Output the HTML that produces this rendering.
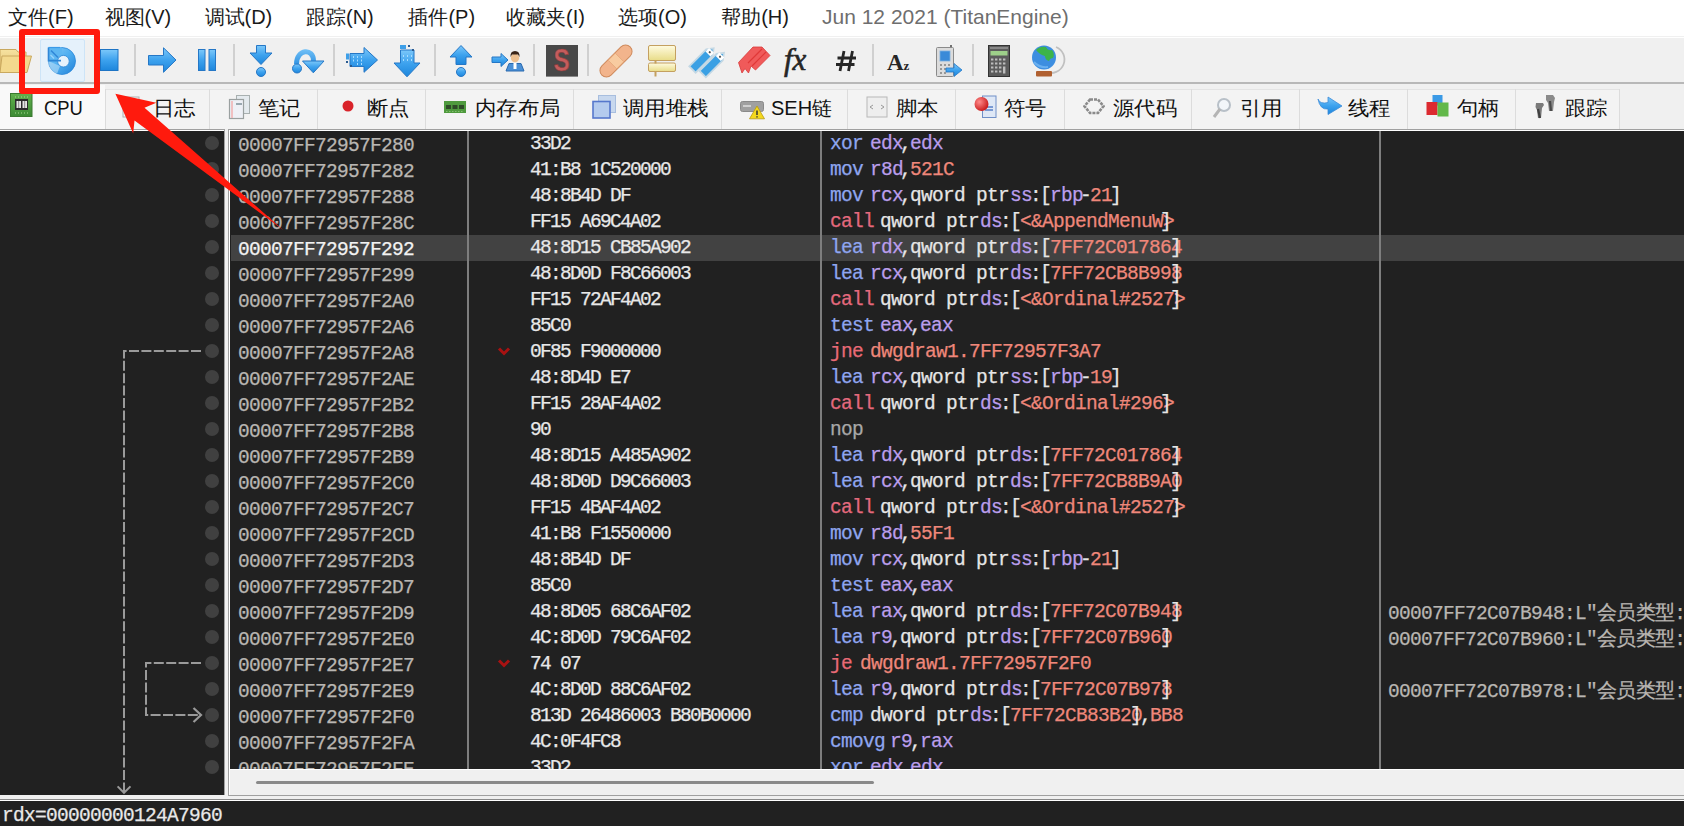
<!DOCTYPE html>
<html><head><meta charset="utf-8"><style>
html,body{margin:0;padding:0;}
body{width:1684px;height:826px;overflow:hidden;position:relative;background:#ffffff;font-family:'Liberation Sans',sans-serif;}
.abs{position:absolute;}
.mi{position:absolute;top:5px;font-size:20px;line-height:24px;color:#1a1a1a;white-space:pre;}
.tt{position:absolute;top:96px;font-size:20px;line-height:24px;color:#111;white-space:pre;}
.ti{position:absolute;}
.row{position:absolute;left:0;width:1684px;height:26px;}
.row i{position:absolute;top:4px;font-style:normal;font-family:'Liberation Mono',monospace;font-size:19.5px;letter-spacing:-0.7px;line-height:22px;white-space:pre;-webkit-text-stroke:0.25px currentColor;}
.row i.b{letter-spacing:-1.7px;top:2px;}
.row i.d{top:2px;}
.hl{position:absolute;left:231px;width:1453px;height:26px;background:#424242;}
</style></head><body>
<div class="abs" style="left:0;top:0;width:1684px;height:37px;background:#ffffff"></div>
<span class="mi" style="left:8px">文件(F)</span><span class="mi" style="left:104.5px">视图(V)</span><span class="mi" style="left:204.5px">调试(D)</span><span class="mi" style="left:306px">跟踪(N)</span><span class="mi" style="left:408.4px">插件(P)</span><span class="mi" style="left:506px">收藏夹(I)</span><span class="mi" style="left:618px">选项(O)</span><span class="mi" style="left:721.2px">帮助(H)</span><span class="mi" style="left:822px;color:#6e6e6e;font-size:21px;top:5px">Jun 12 2021 (TitanEngine)</span>
<div class="abs" style="left:0;top:36px;width:1684px;height:47px;background:#f0f0f0"></div><div class="abs" style="left:0;top:37px;width:1684px;height:1px;background:#ffffff"></div>
<div class="abs" style="left:0;top:82px;width:1684px;height:2px;background:#b8b8b8"></div>
<div class="abs" style="left:0;top:84px;width:1684px;height:45px;background:#f0f0f0"></div>
<div style="position:absolute;left:133.5px;top:44px;width:2px;height:32px;background:#d0d0d0"></div><div style="position:absolute;left:233px;top:44px;width:2px;height:32px;background:#d0d0d0"></div><div style="position:absolute;left:333px;top:44px;width:2px;height:32px;background:#d0d0d0"></div><div style="position:absolute;left:433.5px;top:44px;width:2px;height:32px;background:#d0d0d0"></div><div style="position:absolute;left:533px;top:44px;width:2px;height:32px;background:#d0d0d0"></div><div style="position:absolute;left:587px;top:44px;width:2px;height:32px;background:#d0d0d0"></div><div style="position:absolute;left:872px;top:44px;width:2px;height:32px;background:#d0d0d0"></div><div style="position:absolute;left:971.5px;top:44px;width:2px;height:32px;background:#d0d0d0"></div><div style="position:absolute;left:40px;top:39px;width:45px;height:43px;background:#e5f1fb;border:1px solid #cde4f7;box-sizing:border-box;border-radius:2px"></div><svg style="position:absolute;left:0;top:0" width="1100" height="84" viewBox="0 0 1100 84"><defs><linearGradient id="gblue" x1="0" y1="0" x2="0" y2="1"><stop offset="0" stop-color="#7cc8fa"/><stop offset="0.5" stop-color="#3da2ee"/><stop offset="1" stop-color="#1d86dc"/></linearGradient><linearGradient id="gblue2" gradientUnits="userSpaceOnUse" x1="0" y1="47" x2="0" y2="66"><stop offset="0" stop-color="#7cc8fa"/><stop offset="1" stop-color="#2a8ee0"/></linearGradient><linearGradient id="gfold" x1="0" y1="0" x2="0" y2="1"><stop offset="0" stop-color="#f6e2a0"/><stop offset="1" stop-color="#e2c070"/></linearGradient></defs><path d="M0 49.5 H16 L18 52 H26 V72.5 H0 Z" fill="url(#gfold)" stroke="#c9a85e"/><path d="M2 56 H31.5 L27 72.5 H0 Z" fill="#f3d98e" stroke="#c9a85e"/><defs><linearGradient id="grl" x1="0" y1="0" x2="1" y2="1"><stop offset="0" stop-color="#8ccdf8"/><stop offset="0.5" stop-color="#4eaef0"/><stop offset="1" stop-color="#1f80d8"/></linearGradient></defs><circle cx="62" cy="61" r="13.5" fill="url(#grl)" stroke="#2a86d8" stroke-width="0.8"/><path d="M48.3 61 A13.7 13.7 0 0 0 57 73.8 L60 66 Z" fill="#b8dcf6" opacity="0.6"/><path d="M48 47.5 H62 V60.6 H48 Z" fill="#5db6f2"/><circle cx="63.4" cy="61.2" r="5.8" fill="#e6f2fc" stroke="#2f86d6" stroke-width="0.8"/><path d="M48.5 47.5 V60.6 H61" stroke="#2f86d6" stroke-width="1.6" fill="none"/><path d="M48.5 47.5 H60" stroke="#3a9ae8" stroke-width="1.2"/><path d="M51 50.5 L58 57.5" stroke="#2f86d6" stroke-width="1.4"/><path d="M50.5 55 L54 58.5" stroke="#9ad4fb" stroke-width="1.2"/><rect x="100.5" y="49.5" width="17.5" height="21" fill="url(#gblue)" stroke="#1e74c4"/><path d="M148.5 55.5 H163.5 V47.8 L176 60 L163.5 72.3 V65 H148.5 Z" fill="url(#gblue)" stroke="#2577c6" stroke-width="1"/><rect x="198.5" y="49.5" width="6.5" height="21" fill="url(#gblue)" stroke="#2577c6" stroke-width="1"/><rect x="209" y="49.5" width="6.5" height="21" fill="url(#gblue)" stroke="#2577c6" stroke-width="1"/><path d="M256.5 45.5 H265.5 V53 H272 L261 64.5 L250 53 H256.5 Z" fill="url(#gblue)" stroke="#2577c6" stroke-width="1"/><circle cx="261" cy="72" r="4.5" fill="url(#gblue)" stroke="#2577c6" stroke-width="1"/><path d="M296.5 64 C296.5 49 313.5 47.5 313.5 61" stroke="url(#gblue2)" stroke-width="5" fill="none"/><path d="M302.5 61 H324 L313.3 72.8 Z" fill="url(#gblue)" stroke="#2577c6" stroke-width="1"/><circle cx="297" cy="68.5" r="4.5" fill="url(#gblue)" stroke="#2577c6" stroke-width="1"/><path d="M350 53.5 H364 V47.5 L377.5 60 L364 72.3 V66.5 H350 Z" fill="url(#gblue)" stroke="#2577c6" stroke-width="1"/><rect x="346" y="53.5" width="3" height="6" fill="#3d9fe8"/><rect x="346" y="61" width="2" height="2" fill="#2a5a90"/><rect x="350" y="65" width="2" height="2" fill="#2a5a90"/><path d="M353 57h1M357 57h1M361 57h1M353 60.5h1M357 60.5h1M361 60.5h1M357 64h1M361 64h1" stroke="#a8dcff" stroke-width="2"/><path d="M400.5 50 H414 V63 H420 L407 76.8 L394 63 H400.5 Z" fill="url(#gblue)" stroke="#2577c6" stroke-width="1"/><rect x="400" y="45" width="6" height="4" fill="#3d9fe8"/><rect x="408" y="45" width="2" height="2" fill="#2a5a90"/><rect x="412" y="49" width="2" height="2" fill="#2a5a90"/><path d="M403 56h1M407 56h1M411 56h1M403 60h1M407 60h1M411 60h1" stroke="#a8dcff" stroke-width="2"/><path d="M461 45.5 L472 57 H466 V64.5 H456 V57 H450 Z" fill="url(#gblue)" stroke="#2577c6" stroke-width="1"/><circle cx="461" cy="72" r="4.5" fill="url(#gblue)" stroke="#2577c6" stroke-width="1"/><path d="M492 57 H501 V53.5 L508 60 L501 66.5 V62.5 H492 Z" fill="url(#gblue)" stroke="#2577c6" stroke-width="1"/><path d="M506 71 L509 63.5 H521 L524 71 Z" fill="#4b90d6" stroke="#2a6ab0"/><rect x="513.5" y="63" width="3" height="6" fill="#ffffff"/><circle cx="515" cy="58" r="4.2" fill="#eec090"/><path d="M510.5 57 Q510 51 515 51 Q520 51 519.5 57 L518 54.5 H512 Z" fill="#3a2418"/><rect x="546" y="45" width="32" height="31.6" fill="#484848"/><text x="561.5" y="71.5" font-family="Liberation Sans" font-weight="bold" font-size="31" fill="#c45c5c" stroke="#8a3a3a" stroke-width="0.6" text-anchor="middle" transform="translate(561.5 0) scale(0.78 1) translate(-561.5 0)">S</text><g transform="rotate(-45 616 61)"><rect x="596" y="54.5" width="40" height="13" rx="6.5" fill="#f2b48c" stroke="#cf8a5c"/><rect x="611" y="55" width="10" height="12" fill="#f8cba0" stroke="#e0a070" stroke-width="0.6"/></g><defs><linearGradient id="gy" x1="0" y1="0" x2="0" y2="1"><stop offset="0" stop-color="#fffbe0"/><stop offset="1" stop-color="#e8dc88"/></linearGradient></defs><rect x="648.5" y="45.5" width="27" height="15" rx="1.5" fill="url(#gy)" stroke="#c4a060"/><rect x="648.5" y="63" width="27" height="8.5" rx="1.5" fill="url(#gy)" stroke="#c4a060"/><path d="M655.5 60.5 v3 M655.5 71.5 v5" stroke="#c4a060" stroke-width="2"/><g transform="rotate(-45 708 61)"><path d="M691 51.5 H715 L721 56 L715 60.5 H691 Z" fill="#3aa0e4" stroke="#c4d8e4" stroke-width="1.8"/><path d="M695 62 H719 L725 66.5 L719 71 H695 Z" fill="#3aa0e4" stroke="#c4d8e4" stroke-width="1.8"/><rect x="713" y="52.5" width="5" height="7" fill="#ffffff"/><rect x="717" y="63" width="5" height="7" fill="#ffffff"/><circle cx="715.5" cy="56" r="1.1" fill="#555"/><circle cx="719.5" cy="66.5" r="1.1" fill="#555"/></g><path d="M738.5 62.5 L753 47 H762 L770 55.5 L755.5 70 L751 66 L748.5 73 L745 68.5 L742 73 Z" fill="#f05a5a" stroke="#d83a3a" stroke-width="0.8"/><path d="M748 63 L762 49 M752 66 L766 52" stroke="#e03838" stroke-width="1.2"/><text x="784" y="70" font-family="Liberation Serif" font-style="italic" font-size="31" fill="#262626" stroke="#262626" stroke-width="0.6">fx</text><path d="M844 51 L840 71 M852.5 51 L848.5 71 M837.5 58 H856 M836 64.5 H854.5" stroke="#262626" stroke-width="2.8"/><text x="887" y="69.5" font-family="Liberation Serif" font-weight="bold" font-size="23" fill="#262626">A</text><text x="903.5" y="69.5" font-family="Liberation Serif" font-weight="bold" font-size="13" fill="#262626">z</text><rect x="950" y="45" width="2" height="5" fill="#707070"/><rect x="936.5" y="47.5" width="17" height="29" rx="1" fill="#dcdcdc" stroke="#8a8a8a"/><rect x="940" y="51" width="10" height="10" fill="#3a8ad8" stroke="#7aaee0" stroke-width="0.8"/><path d="M940 65h2M944 65h2M948 65h2M940 69h2M944 69h2M940 73h2M944 73h2" stroke="#808080" stroke-width="1.6"/><path d="M946 68 H954 V63.5 L962 70 L954 76.5 V72 H946 Z" fill="url(#gblue)" stroke="#2577c6" stroke-width="0.8"/><rect x="988.5" y="45.5" width="21" height="31" fill="#5c5c5c" stroke="#333"/><rect x="990" y="47" width="18" height="2" fill="#888"/><rect x="990.5" y="51" width="17" height="4.5" fill="#9ed08a"/><path d="M991 59.5h2.4M995 59.5h2.4M999 59.5h2.4M1003 59.5h2.4M991 63.5h2.4M995 63.5h2.4M999 63.5h2.4M1003 63.5h2.4M991 67.5h2.4M995 67.5h2.4M999 67.5h2.4M991 71.5h2.4M995 71.5h2.4M999 71.5h2.4" stroke="#bdbdbd" stroke-width="2"/><rect x="1003" y="66.5" width="2.4" height="7" fill="#bdbdbd"/><path d="M1056 47 A13 13 0 0 1 1046 72" stroke="#c0c0c0" stroke-width="1.8" fill="none"/><circle cx="1044" cy="57.5" r="12" fill="#3d8ee0"/><path d="M1036 50 q4 -4 10 -3 q2 4 6 3 q3 4 1 8 q-3 0 -4 3 q-4 -1 -4 -5 q-5 -1 -9 -6z" fill="#3cb44a"/><path d="M1034 62 q5 6 14 5" stroke="#6ab0f0" stroke-width="2" fill="none"/><rect x="1036" y="71" width="16" height="5.6" rx="1" fill="#b06030"/></svg>
<div style="position:absolute;left:0;top:85px;width:105px;height:44px;background:#f9f9f9"></div><div style="position:absolute;left:105px;top:89px;width:1514px;height:40px;background:#f3f3f3;border-top:1px solid #e3e3e3;box-sizing:border-box"></div><div style="position:absolute;left:105px;top:89px;width:1px;height:40px;background:#dcdcdc"></div><div style="position:absolute;left:209px;top:89px;width:1px;height:40px;background:#dcdcdc"></div><div style="position:absolute;left:317px;top:89px;width:1px;height:40px;background:#dcdcdc"></div><div style="position:absolute;left:425px;top:89px;width:1px;height:40px;background:#dcdcdc"></div><div style="position:absolute;left:573px;top:89px;width:1px;height:40px;background:#dcdcdc"></div><div style="position:absolute;left:721px;top:89px;width:1px;height:40px;background:#dcdcdc"></div><div style="position:absolute;left:847px;top:89px;width:1px;height:40px;background:#dcdcdc"></div><div style="position:absolute;left:955px;top:89px;width:1px;height:40px;background:#dcdcdc"></div><div style="position:absolute;left:1064px;top:89px;width:1px;height:40px;background:#dcdcdc"></div><div style="position:absolute;left:1191px;top:89px;width:1px;height:40px;background:#dcdcdc"></div><div style="position:absolute;left:1299px;top:89px;width:1px;height:40px;background:#dcdcdc"></div><div style="position:absolute;left:1407px;top:89px;width:1px;height:40px;background:#dcdcdc"></div><div style="position:absolute;left:1515px;top:89px;width:1px;height:40px;background:#dcdcdc"></div><div style="position:absolute;left:1619px;top:89px;width:1px;height:40px;background:#dcdcdc"></div><svg class="ti" style="left:10px;top:93px" width="23" height="24" viewBox="0 0 23 24"><defs><linearGradient id="gcpu" x1="0" y1="0" x2="0" y2="1"><stop offset="0" stop-color="#62b04e"/><stop offset="1" stop-color="#3b8a33"/></linearGradient></defs><rect x="0.5" y="0.5" width="21.5" height="23" fill="url(#gcpu)" stroke="#3a7a30"/><path d="M5 4h1M8 4h1M11 4h1M14 4h1M17 4h1M5 20h1M8 20h1M11 20h1M14 20h1M17 20h1" stroke="#a8d890"/><rect x="5" y="6" width="13" height="11" fill="#2c2c2c"/><rect x="6.5" y="8" width="4.5" height="7" fill="#e6e6e6"/><rect x="12.5" y="8" width="4.5" height="7" fill="#e6e6e6"/><path d="M8.7 8v7M14.7 8v7" stroke="#8a8a8a"/></svg><span class="tt" style="left:43.5px;transform:scaleX(0.92);transform-origin:0 0">CPU</span><svg class="ti" style="left:122px;top:96px" width="20" height="22" viewBox="0 0 20 22"><rect x="1" y="1" width="16" height="20" fill="#f4f4f4" stroke="#b0b0b0"/><path d="M4 6h10M4 10h10M4 14h8" stroke="#c0c0c0"/></svg><span class="tt" style="left:152.5px;transform:scaleX(1.07);transform-origin:0 0">日志</span><svg class="ti" style="left:228px;top:95px" width="24" height="25" viewBox="0 0 24 25"><rect x="8.5" y="0.5" width="13" height="18" fill="#e4eaee" stroke="#a8b0b0"/><rect x="1.5" y="4.5" width="14" height="19" fill="#eef0f6" stroke="#9aa0a0" stroke-width="1.2"/><path d="M4 6v17" stroke="#f0b0b0" stroke-width="1.5"/><path d="M8 9h6" stroke="#9aa8b0" stroke-width="2"/></svg><span class="tt" style="left:258.0px;transform:scaleX(1.07);transform-origin:0 0">笔记</span><svg class="ti" style="left:341.5px;top:100px" width="12" height="12" viewBox="0 0 12 12"><circle cx="6" cy="6" r="5.5" fill="#d9232a"/></svg><span class="tt" style="left:366.5px;transform:scaleX(1.07);transform-origin:0 0">断点</span><svg class="ti" style="left:444px;top:101px" width="22" height="12" viewBox="0 0 22 12"><rect x="0" y="0" width="22" height="12" fill="#4f9a3e"/><rect x="2" y="4" width="5" height="4" fill="#2e4a28"/><rect x="8.5" y="4" width="5" height="4" fill="#2e4a28"/><rect x="15" y="4" width="5" height="4" fill="#2e4a28"/><path d="M2 10.5h18" stroke="#86c070" stroke-dasharray="1.5 1.5"/></svg><span class="tt" style="left:474.5px;transform:scaleX(1.07);transform-origin:0 0">内存布局</span><svg class="ti" style="left:592px;top:95px" width="25" height="24" viewBox="0 0 25 24"><rect x="6.5" y="0.5" width="17" height="17" fill="#c8d8ee" stroke="#a8bede"/><rect x="1" y="6.5" width="17" height="16.5" fill="#b4cbee" stroke="#5577cc" stroke-width="1.6"/></svg><span class="tt" style="left:622.5px;transform:scaleX(1.07);transform-origin:0 0">调用堆栈</span><svg class="ti" style="left:740px;top:100px" width="25" height="20" viewBox="0 0 25 20"><rect x="0.5" y="1.5" width="23" height="10" rx="2" fill="#a0a0a0" stroke="#8a8a8a"/><rect x="3" y="5" width="8" height="2" fill="#d0d0d0"/><path d="M17 6 L24.5 18.8 H9.5 Z" fill="#f4d81c" stroke="#b89a10" stroke-width="0.8"/><path d="M17 10.5v4.5M17 16.3v1.2" stroke="#333" stroke-width="1.5"/></svg><span class="tt" style="left:771px">SEH链</span><svg class="ti" style="left:866px;top:96px" width="22" height="22" viewBox="0 0 22 22"><rect x="1" y="1" width="20" height="20" fill="#eeeeee" stroke="#b8b8b8"/><path d="M7 9l-3 2 3 2M15 9l3 2-3 2" stroke="#999" fill="none"/></svg><span class="tt" style="left:896.0px;transform:scaleX(1.07);transform-origin:0 0">脚本</span><svg class="ti" style="left:974px;top:95px" width="23" height="24" viewBox="0 0 23 24"><defs><radialGradient id="gred" cx="0.35" cy="0.35" r="0.7"><stop offset="0" stop-color="#ff8a8a"/><stop offset="1" stop-color="#c81818"/></radialGradient></defs><rect x="8.5" y="1" width="13.5" height="21.5" fill="#dfe8f6" stroke="#7090c8"/><path d="M11 12h8M11 15h8" stroke="#5a80c8" stroke-width="1.3"/><circle cx="7.5" cy="9" r="7" fill="url(#gred)"/></svg><span class="tt" style="left:1004.1px;transform:scaleX(1.07);transform-origin:0 0">符号</span><svg class="ti" style="left:1083px;top:98px" width="22" height="17" viewBox="0 0 22 17"><path d="M7 1.5 H15 L20.5 8.2 L15 15 H7 L1.5 8.2 Z" stroke="#8a8a8a" stroke-width="2.6" fill="none" stroke-dasharray="3 1"/></svg><span class="tt" style="left:1112.5px;transform:scaleX(1.07);transform-origin:0 0">源代码</span><svg class="ti" style="left:1212px;top:97px" width="20" height="22" viewBox="0 0 20 22"><circle cx="12" cy="8" r="6" fill="#f2f6fa" stroke="#b8c0c8" stroke-width="2"/><path d="M8 12 L2 20" stroke="#b4b4b4" stroke-width="3"/></svg><span class="tt" style="left:1239.9px;transform:scaleX(1.07);transform-origin:0 0">引用</span><svg class="ti" style="left:1317px;top:95px" width="26" height="21" viewBox="0 0 26 21"><path d="M1 4 Q3 9.5 11 7.5 V2 L25 11 L11 19.5 V14 Q3 15 1 4 Z" fill="url(#gblue)" stroke="#3a8ad8" stroke-width="0.8"/></svg><span class="tt" style="left:1348.2px;transform:scaleX(1.07);transform-origin:0 0">线程</span><svg class="ti" style="left:1426px;top:93px" width="23" height="25" viewBox="0 0 23 25"><rect x="6.5" y="2" width="10" height="10.5" fill="#3b9ae6"/><rect x="0.5" y="9" width="11" height="13" fill="#dc2a30"/><rect x="11.5" y="9.5" width="11" height="14" fill="#62b84a"/></svg><span class="tt" style="left:1456.9px;transform:scaleX(1.07);transform-origin:0 0">句柄</span><svg class="ti" style="left:1535px;top:94px" width="23" height="26" viewBox="0 0 23 26"><path d="M1 9 H8 L9 11 L7 14 L6 24 H3 L2 16 L0.5 13 Z" fill="#7a7a7a"/><path d="M3 15 L5 24" stroke="#404040" stroke-width="2.2"/><path d="M11 1 H18 L20 4 L19 8 L18 17 H14 L13 9 L11 6 Z" fill="#8a8a8a"/><path d="M15 7 L16 17" stroke="#4a4a4a" stroke-width="2.2"/></svg><span class="tt" style="left:1564.5px;transform:scaleX(1.07);transform-origin:0 0">跟踪</span>
<!-- main frames -->
<div class="abs" style="left:0;top:129px;width:1684px;height:672px;background:#f0f0f0"></div>
<div class="abs" style="left:0;top:129px;width:225px;height:1px;background:#a0a0a0"></div>
<div class="abs" style="left:0;top:130px;width:224px;height:1px;background:#ffffff"></div>
<div class="abs" style="left:0;top:131px;width:224px;height:664px;background:#212121"></div>
<div class="abs" style="left:224px;top:129px;width:1px;height:666px;background:#a0a0a0"></div>
<div class="abs" style="left:228px;top:129px;width:1456px;height:1px;background:#a0a0a0"></div>
<div class="abs" style="left:228px;top:129px;width:1px;height:667px;background:#a0a0a0"></div>
<div class="abs" style="left:229px;top:130px;width:1455px;height:1px;background:#ffffff"></div>
<div class="abs" style="left:229px;top:130px;width:1px;height:665px;background:#ffffff"></div>
<div class="abs" style="left:230px;top:131px;width:1454px;height:638px;background:#212121;overflow:hidden"></div>
<div class="abs" style="left:228px;top:795px;width:1456px;height:1px;background:#a0a0a0"></div>
<div class="abs" style="left:230px;top:769px;width:1454px;height:1px;background:#ffffff"></div>
<div class="abs" style="left:256px;top:781px;width:618px;height:3px;background:#8a8a8a;border-radius:2px"></div>
<div class="abs" style="left:0;top:799px;width:1684px;height:1px;background:#8a8a8a"></div>
<div class="abs" style="left:0;top:800px;width:1684px;height:1px;background:#ffffff"></div>
<div class="abs" style="left:0;top:801px;width:1684px;height:25px;background:#212121"></div>
<!-- disasm content -->
<div class="abs" style="left:0;top:0;width:1684px;height:769px;overflow:hidden">
<div class="abs" style="left:0;top:0;width:1684px;height:769px;clip-path:inset(131px 0 0 230px)">
<div class="row" style="top:131px"><i style="left:238px;color:#b9b6b2">00007FF72957F280</i><i class="b" style="left:530px;color:#e8e8e8">33D2</i><i class="d" style="left:830px;color:#8fa6f0">xor</i><i class="d" style="left:870px;color:#bb9eec">edx</i><i class="d" style="left:900px;color:#e6e6e6">,</i><i class="d" style="left:910px;color:#bb9eec">edx</i></div><div class="row" style="top:157px"><i style="left:238px;color:#b9b6b2">00007FF72957F282</i><i class="b" style="left:530px;color:#e8e8e8">41</i><i class="b" style="left:550px;color:#e8e8e8">:</i><i class="b" style="left:560px;color:#e8e8e8">B8</i><i class="b" style="left:590px;color:#e8e8e8">1C520000</i><i class="d" style="left:830px;color:#8fa6f0">mov</i><i class="d" style="left:870px;color:#bb9eec">r8d</i><i class="d" style="left:900px;color:#e6e6e6">,</i><i class="d" style="left:910px;color:#ef877a">521C</i></div><div class="row" style="top:183px"><i style="left:238px;color:#b9b6b2">00007FF72957F288</i><i class="b" style="left:530px;color:#e8e8e8">48</i><i class="b" style="left:550px;color:#e8e8e8">:</i><i class="b" style="left:560px;color:#e8e8e8">8B4D</i><i class="b" style="left:610px;color:#e8e8e8">DF</i><i class="d" style="left:830px;color:#8fa6f0">mov</i><i class="d" style="left:870px;color:#bb9eec">rcx</i><i class="d" style="left:900px;color:#e6e6e6">,</i><i class="d" style="left:910px;color:#e6e6e6">qword ptr</i><i class="d" style="left:1010px;color:#bb9eec">ss</i><i class="d" style="left:1030px;color:#e6e6e6">:</i><i class="d" style="left:1040px;color:#e6e6e6">[</i><i class="d" style="left:1050px;color:#bb9eec">rbp</i><i class="d" style="left:1080px;color:#e6e6e6">-</i><i class="d" style="left:1090px;color:#ef877a">21</i><i class="d" style="left:1110px;color:#e6e6e6">]</i></div><div class="row" style="top:209px"><i style="left:238px;color:#b9b6b2">00007FF72957F28C</i><i class="b" style="left:530px;color:#e8e8e8">FF15</i><i class="b" style="left:580px;color:#e8e8e8">A69C4A02</i><i class="d" style="left:830px;color:#e4697d">call</i><i class="d" style="left:880px;color:#e6e6e6">qword ptr</i><i class="d" style="left:980px;color:#bb9eec">ds</i><i class="d" style="left:1000px;color:#e6e6e6">:</i><i class="d" style="left:1010px;color:#e6e6e6">[</i><i class="d" style="left:1020px;color:#ef877a">&lt;&amp;AppendMenuW&gt;</i><i class="d" style="left:1160px;color:#e6e6e6">]</i></div><div class="hl" style="top:235px"></div><div class="row" style="top:235px"><i style="left:238px;color:#f2f2f2">00007FF72957F292</i><i class="b" style="left:530px;color:#e8e8e8">48</i><i class="b" style="left:550px;color:#e8e8e8">:</i><i class="b" style="left:560px;color:#e8e8e8">8D15</i><i class="b" style="left:610px;color:#e8e8e8">CB85A902</i><i class="d" style="left:830px;color:#8fa6f0">lea</i><i class="d" style="left:870px;color:#bb9eec">rdx</i><i class="d" style="left:900px;color:#e6e6e6">,</i><i class="d" style="left:910px;color:#e6e6e6">qword ptr</i><i class="d" style="left:1010px;color:#bb9eec">ds</i><i class="d" style="left:1030px;color:#e6e6e6">:</i><i class="d" style="left:1040px;color:#e6e6e6">[</i><i class="d" style="left:1050px;color:#ef877a">7FF72C017864</i><i class="d" style="left:1170px;color:#e6e6e6">]</i></div><div class="row" style="top:261px"><i style="left:238px;color:#b9b6b2">00007FF72957F299</i><i class="b" style="left:530px;color:#e8e8e8">48</i><i class="b" style="left:550px;color:#e8e8e8">:</i><i class="b" style="left:560px;color:#e8e8e8">8D0D</i><i class="b" style="left:610px;color:#e8e8e8">F8C66003</i><i class="d" style="left:830px;color:#8fa6f0">lea</i><i class="d" style="left:870px;color:#bb9eec">rcx</i><i class="d" style="left:900px;color:#e6e6e6">,</i><i class="d" style="left:910px;color:#e6e6e6">qword ptr</i><i class="d" style="left:1010px;color:#bb9eec">ds</i><i class="d" style="left:1030px;color:#e6e6e6">:</i><i class="d" style="left:1040px;color:#e6e6e6">[</i><i class="d" style="left:1050px;color:#ef877a">7FF72CB8B998</i><i class="d" style="left:1170px;color:#e6e6e6">]</i></div><div class="row" style="top:287px"><i style="left:238px;color:#b9b6b2">00007FF72957F2A0</i><i class="b" style="left:530px;color:#e8e8e8">FF15</i><i class="b" style="left:580px;color:#e8e8e8">72AF4A02</i><i class="d" style="left:830px;color:#e4697d">call</i><i class="d" style="left:880px;color:#e6e6e6">qword ptr</i><i class="d" style="left:980px;color:#bb9eec">ds</i><i class="d" style="left:1000px;color:#e6e6e6">:</i><i class="d" style="left:1010px;color:#e6e6e6">[</i><i class="d" style="left:1020px;color:#ef877a">&lt;&amp;Ordinal#2527&gt;</i><i class="d" style="left:1170px;color:#e6e6e6">]</i></div><div class="row" style="top:313px"><i style="left:238px;color:#b9b6b2">00007FF72957F2A6</i><i class="b" style="left:530px;color:#e8e8e8">85C0</i><i class="d" style="left:830px;color:#8fa6f0">test</i><i class="d" style="left:880px;color:#bb9eec">eax</i><i class="d" style="left:910px;color:#e6e6e6">,</i><i class="d" style="left:920px;color:#bb9eec">eax</i></div><div class="row" style="top:339px"><i style="left:238px;color:#b9b6b2">00007FF72957F2A8</i><i class="b" style="left:530px;color:#e8e8e8">0F85</i><i class="b" style="left:580px;color:#e8e8e8">F9000000</i><i class="d" style="left:830px;color:#e96a76">jne</i><i class="d" style="left:870px;color:#ef877a">dwgdraw1.7FF72957F3A7</i></div><div class="row" style="top:365px"><i style="left:238px;color:#b9b6b2">00007FF72957F2AE</i><i class="b" style="left:530px;color:#e8e8e8">48</i><i class="b" style="left:550px;color:#e8e8e8">:</i><i class="b" style="left:560px;color:#e8e8e8">8D4D</i><i class="b" style="left:610px;color:#e8e8e8">E7</i><i class="d" style="left:830px;color:#8fa6f0">lea</i><i class="d" style="left:870px;color:#bb9eec">rcx</i><i class="d" style="left:900px;color:#e6e6e6">,</i><i class="d" style="left:910px;color:#e6e6e6">qword ptr</i><i class="d" style="left:1010px;color:#bb9eec">ss</i><i class="d" style="left:1030px;color:#e6e6e6">:</i><i class="d" style="left:1040px;color:#e6e6e6">[</i><i class="d" style="left:1050px;color:#bb9eec">rbp</i><i class="d" style="left:1080px;color:#e6e6e6">-</i><i class="d" style="left:1090px;color:#ef877a">19</i><i class="d" style="left:1110px;color:#e6e6e6">]</i></div><div class="row" style="top:391px"><i style="left:238px;color:#b9b6b2">00007FF72957F2B2</i><i class="b" style="left:530px;color:#e8e8e8">FF15</i><i class="b" style="left:580px;color:#e8e8e8">28AF4A02</i><i class="d" style="left:830px;color:#e4697d">call</i><i class="d" style="left:880px;color:#e6e6e6">qword ptr</i><i class="d" style="left:980px;color:#bb9eec">ds</i><i class="d" style="left:1000px;color:#e6e6e6">:</i><i class="d" style="left:1010px;color:#e6e6e6">[</i><i class="d" style="left:1020px;color:#ef877a">&lt;&amp;Ordinal#296&gt;</i><i class="d" style="left:1160px;color:#e6e6e6">]</i></div><div class="row" style="top:417px"><i style="left:238px;color:#b9b6b2">00007FF72957F2B8</i><i class="b" style="left:530px;color:#e8e8e8">90</i><i class="d" style="left:830px;color:#a8a8a8">nop</i></div><div class="row" style="top:443px"><i style="left:238px;color:#b9b6b2">00007FF72957F2B9</i><i class="b" style="left:530px;color:#e8e8e8">48</i><i class="b" style="left:550px;color:#e8e8e8">:</i><i class="b" style="left:560px;color:#e8e8e8">8D15</i><i class="b" style="left:610px;color:#e8e8e8">A485A902</i><i class="d" style="left:830px;color:#8fa6f0">lea</i><i class="d" style="left:870px;color:#bb9eec">rdx</i><i class="d" style="left:900px;color:#e6e6e6">,</i><i class="d" style="left:910px;color:#e6e6e6">qword ptr</i><i class="d" style="left:1010px;color:#bb9eec">ds</i><i class="d" style="left:1030px;color:#e6e6e6">:</i><i class="d" style="left:1040px;color:#e6e6e6">[</i><i class="d" style="left:1050px;color:#ef877a">7FF72C017864</i><i class="d" style="left:1170px;color:#e6e6e6">]</i></div><div class="row" style="top:469px"><i style="left:238px;color:#b9b6b2">00007FF72957F2C0</i><i class="b" style="left:530px;color:#e8e8e8">48</i><i class="b" style="left:550px;color:#e8e8e8">:</i><i class="b" style="left:560px;color:#e8e8e8">8D0D</i><i class="b" style="left:610px;color:#e8e8e8">D9C66003</i><i class="d" style="left:830px;color:#8fa6f0">lea</i><i class="d" style="left:870px;color:#bb9eec">rcx</i><i class="d" style="left:900px;color:#e6e6e6">,</i><i class="d" style="left:910px;color:#e6e6e6">qword ptr</i><i class="d" style="left:1010px;color:#bb9eec">ds</i><i class="d" style="left:1030px;color:#e6e6e6">:</i><i class="d" style="left:1040px;color:#e6e6e6">[</i><i class="d" style="left:1050px;color:#ef877a">7FF72CB8B9A0</i><i class="d" style="left:1170px;color:#e6e6e6">]</i></div><div class="row" style="top:495px"><i style="left:238px;color:#b9b6b2">00007FF72957F2C7</i><i class="b" style="left:530px;color:#e8e8e8">FF15</i><i class="b" style="left:580px;color:#e8e8e8">4BAF4A02</i><i class="d" style="left:830px;color:#e4697d">call</i><i class="d" style="left:880px;color:#e6e6e6">qword ptr</i><i class="d" style="left:980px;color:#bb9eec">ds</i><i class="d" style="left:1000px;color:#e6e6e6">:</i><i class="d" style="left:1010px;color:#e6e6e6">[</i><i class="d" style="left:1020px;color:#ef877a">&lt;&amp;Ordinal#2527&gt;</i><i class="d" style="left:1170px;color:#e6e6e6">]</i></div><div class="row" style="top:521px"><i style="left:238px;color:#b9b6b2">00007FF72957F2CD</i><i class="b" style="left:530px;color:#e8e8e8">41</i><i class="b" style="left:550px;color:#e8e8e8">:</i><i class="b" style="left:560px;color:#e8e8e8">B8</i><i class="b" style="left:590px;color:#e8e8e8">F1550000</i><i class="d" style="left:830px;color:#8fa6f0">mov</i><i class="d" style="left:870px;color:#bb9eec">r8d</i><i class="d" style="left:900px;color:#e6e6e6">,</i><i class="d" style="left:910px;color:#ef877a">55F1</i></div><div class="row" style="top:547px"><i style="left:238px;color:#b9b6b2">00007FF72957F2D3</i><i class="b" style="left:530px;color:#e8e8e8">48</i><i class="b" style="left:550px;color:#e8e8e8">:</i><i class="b" style="left:560px;color:#e8e8e8">8B4D</i><i class="b" style="left:610px;color:#e8e8e8">DF</i><i class="d" style="left:830px;color:#8fa6f0">mov</i><i class="d" style="left:870px;color:#bb9eec">rcx</i><i class="d" style="left:900px;color:#e6e6e6">,</i><i class="d" style="left:910px;color:#e6e6e6">qword ptr</i><i class="d" style="left:1010px;color:#bb9eec">ss</i><i class="d" style="left:1030px;color:#e6e6e6">:</i><i class="d" style="left:1040px;color:#e6e6e6">[</i><i class="d" style="left:1050px;color:#bb9eec">rbp</i><i class="d" style="left:1080px;color:#e6e6e6">-</i><i class="d" style="left:1090px;color:#ef877a">21</i><i class="d" style="left:1110px;color:#e6e6e6">]</i></div><div class="row" style="top:573px"><i style="left:238px;color:#b9b6b2">00007FF72957F2D7</i><i class="b" style="left:530px;color:#e8e8e8">85C0</i><i class="d" style="left:830px;color:#8fa6f0">test</i><i class="d" style="left:880px;color:#bb9eec">eax</i><i class="d" style="left:910px;color:#e6e6e6">,</i><i class="d" style="left:920px;color:#bb9eec">eax</i></div><div class="row" style="top:599px"><i style="left:238px;color:#b9b6b2">00007FF72957F2D9</i><i class="b" style="left:530px;color:#e8e8e8">48</i><i class="b" style="left:550px;color:#e8e8e8">:</i><i class="b" style="left:560px;color:#e8e8e8">8D05</i><i class="b" style="left:610px;color:#e8e8e8">68C6AF02</i><i class="d" style="left:830px;color:#8fa6f0">lea</i><i class="d" style="left:870px;color:#bb9eec">rax</i><i class="d" style="left:900px;color:#e6e6e6">,</i><i class="d" style="left:910px;color:#e6e6e6">qword ptr</i><i class="d" style="left:1010px;color:#bb9eec">ds</i><i class="d" style="left:1030px;color:#e6e6e6">:</i><i class="d" style="left:1040px;color:#e6e6e6">[</i><i class="d" style="left:1050px;color:#ef877a">7FF72C07B948</i><i class="d" style="left:1170px;color:#e6e6e6">]</i><i style="left:1388px;color:#b9b6b2">00007FF72C07B948:L&quot;会员类型:</i></div><div class="row" style="top:625px"><i style="left:238px;color:#b9b6b2">00007FF72957F2E0</i><i class="b" style="left:530px;color:#e8e8e8">4C</i><i class="b" style="left:550px;color:#e8e8e8">:</i><i class="b" style="left:560px;color:#e8e8e8">8D0D</i><i class="b" style="left:610px;color:#e8e8e8">79C6AF02</i><i class="d" style="left:830px;color:#8fa6f0">lea</i><i class="d" style="left:870px;color:#bb9eec">r9</i><i class="d" style="left:890px;color:#e6e6e6">,</i><i class="d" style="left:900px;color:#e6e6e6">qword ptr</i><i class="d" style="left:1000px;color:#bb9eec">ds</i><i class="d" style="left:1020px;color:#e6e6e6">:</i><i class="d" style="left:1030px;color:#e6e6e6">[</i><i class="d" style="left:1040px;color:#ef877a">7FF72C07B960</i><i class="d" style="left:1160px;color:#e6e6e6">]</i><i style="left:1388px;color:#b9b6b2">00007FF72C07B960:L&quot;会员类型:</i></div><div class="row" style="top:651px"><i style="left:238px;color:#b9b6b2">00007FF72957F2E7</i><i class="b" style="left:530px;color:#e8e8e8">74</i><i class="b" style="left:560px;color:#e8e8e8">07</i><i class="d" style="left:830px;color:#e96a76">je</i><i class="d" style="left:860px;color:#ef877a">dwgdraw1.7FF72957F2F0</i></div><div class="row" style="top:677px"><i style="left:238px;color:#b9b6b2">00007FF72957F2E9</i><i class="b" style="left:530px;color:#e8e8e8">4C</i><i class="b" style="left:550px;color:#e8e8e8">:</i><i class="b" style="left:560px;color:#e8e8e8">8D0D</i><i class="b" style="left:610px;color:#e8e8e8">88C6AF02</i><i class="d" style="left:830px;color:#8fa6f0">lea</i><i class="d" style="left:870px;color:#bb9eec">r9</i><i class="d" style="left:890px;color:#e6e6e6">,</i><i class="d" style="left:900px;color:#e6e6e6">qword ptr</i><i class="d" style="left:1000px;color:#bb9eec">ds</i><i class="d" style="left:1020px;color:#e6e6e6">:</i><i class="d" style="left:1030px;color:#e6e6e6">[</i><i class="d" style="left:1040px;color:#ef877a">7FF72C07B978</i><i class="d" style="left:1160px;color:#e6e6e6">]</i><i style="left:1388px;color:#b9b6b2">00007FF72C07B978:L&quot;会员类型:</i></div><div class="row" style="top:703px"><i style="left:238px;color:#b9b6b2">00007FF72957F2F0</i><i class="b" style="left:530px;color:#e8e8e8">813D</i><i class="b" style="left:580px;color:#e8e8e8">26486003</i><i class="b" style="left:670px;color:#e8e8e8">B80B0000</i><i class="d" style="left:830px;color:#8fa6f0">cmp</i><i class="d" style="left:870px;color:#e6e6e6">dword ptr</i><i class="d" style="left:970px;color:#bb9eec">ds</i><i class="d" style="left:990px;color:#e6e6e6">:</i><i class="d" style="left:1000px;color:#e6e6e6">[</i><i class="d" style="left:1010px;color:#ef877a">7FF72CB83B20</i><i class="d" style="left:1130px;color:#e6e6e6">]</i><i class="d" style="left:1140px;color:#e6e6e6">,</i><i class="d" style="left:1150px;color:#ef877a">BB8</i></div><div class="row" style="top:729px"><i style="left:238px;color:#b9b6b2">00007FF72957F2FA</i><i class="b" style="left:530px;color:#e8e8e8">4C</i><i class="b" style="left:550px;color:#e8e8e8">:</i><i class="b" style="left:560px;color:#e8e8e8">0F4FC8</i><i class="d" style="left:830px;color:#8fa6f0">cmovg</i><i class="d" style="left:890px;color:#bb9eec">r9</i><i class="d" style="left:910px;color:#e6e6e6">,</i><i class="d" style="left:920px;color:#bb9eec">rax</i></div><div class="row" style="top:755px"><i style="left:238px;color:#b9b6b2">00007FF72957F2FE</i><i class="b" style="left:530px;color:#e8e8e8">33D2</i><i class="d" style="left:830px;color:#8fa6f0">xor</i><i class="d" style="left:870px;color:#bb9eec">edx</i><i class="d" style="left:900px;color:#e6e6e6">,</i><i class="d" style="left:910px;color:#bb9eec">edx</i></div>
<div class="abs" style="left:467px;top:131px;width:2px;height:638px;background:#7e7e7e"></div>
<div class="abs" style="left:819.5px;top:131px;width:2px;height:638px;background:#7e7e7e"></div>
<div class="abs" style="left:1379px;top:131px;width:2px;height:638px;background:#7e7e7e"></div>
<svg class="abs" style="left:0;top:0" width="1684" height="769"><path d="M499 348.5 L504 353.5 L509 348.5" stroke="#a81212" stroke-width="3" fill="none"/><path d="M499 660.5 L504 665.5 L509 660.5" stroke="#a81212" stroke-width="3" fill="none"/></svg>
</div>
</div>
<svg class="abs" style="left:0;top:0;clip-path:inset(131px 1460px 31px 0)" width="1684" height="826"><circle cx="212" cy="143" r="7" fill="#404040"/><circle cx="212" cy="169" r="7" fill="#404040"/><circle cx="212" cy="195" r="7" fill="#404040"/><circle cx="212" cy="221" r="7" fill="#404040"/><circle cx="212" cy="247" r="7" fill="#404040"/><circle cx="212" cy="273" r="7" fill="#404040"/><circle cx="212" cy="299" r="7" fill="#404040"/><circle cx="212" cy="325" r="7" fill="#404040"/><circle cx="212" cy="351" r="7" fill="#404040"/><circle cx="212" cy="377" r="7" fill="#404040"/><circle cx="212" cy="403" r="7" fill="#404040"/><circle cx="212" cy="429" r="7" fill="#404040"/><circle cx="212" cy="455" r="7" fill="#404040"/><circle cx="212" cy="481" r="7" fill="#404040"/><circle cx="212" cy="507" r="7" fill="#404040"/><circle cx="212" cy="533" r="7" fill="#404040"/><circle cx="212" cy="559" r="7" fill="#404040"/><circle cx="212" cy="585" r="7" fill="#404040"/><circle cx="212" cy="611" r="7" fill="#404040"/><circle cx="212" cy="637" r="7" fill="#404040"/><circle cx="212" cy="663" r="7" fill="#404040"/><circle cx="212" cy="689" r="7" fill="#404040"/><circle cx="212" cy="715" r="7" fill="#404040"/><circle cx="212" cy="741" r="7" fill="#404040"/><circle cx="212" cy="767" r="7" fill="#404040"/>
<path d="M201 351 H124 V793" stroke="#9a9a9a" stroke-width="2" fill="none" stroke-dasharray="10 2.4"/>
<path d="M117.6 786.4 L124 792.8 L130.5 786.4" stroke="#9a9a9a" stroke-width="2" fill="none"/>
<path d="M201 663 H146 V715 H201" stroke="#9a9a9a" stroke-width="2" fill="none" stroke-dasharray="10 2.4"/>
<path d="M193.5 708 L201 715 L193.5 722" stroke="#9a9a9a" stroke-width="2.2" fill="none"/>
</svg>
<div class="row" style="top:801px;height:25px"><i style="left:2px;top:4px;color:#e8e8e8">rdx=00000000124A7960</i></div>
<!-- annotation -->
<div class="abs" style="left:19px;top:29px;width:81px;height:65px;border:6px solid #ff1a0d;box-sizing:border-box;border-radius:3px"></div>
<svg class="abs" style="left:0;top:0" width="400" height="300"><path d="M115.4 93.7 L156.3 102.8 L144.5 107.7 L283.5 230.3 L134.5 120.4 L133.2 133.6 Z" fill="#ff1a0d"/></svg>
</body></html>
